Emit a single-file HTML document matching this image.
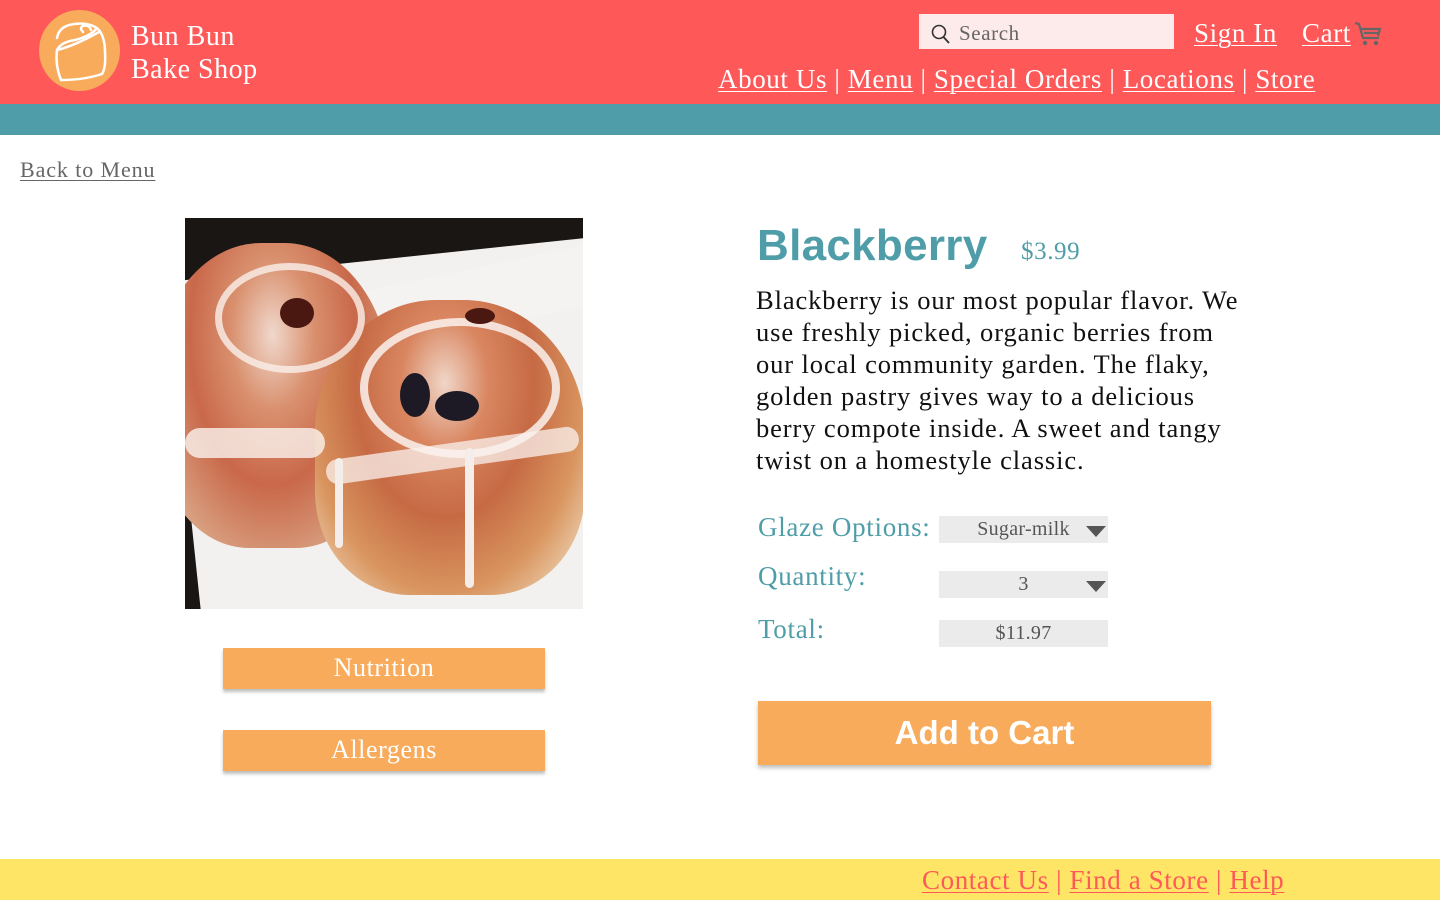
<!DOCTYPE html>
<html><head><meta charset="utf-8"><style>
*{margin:0;padding:0;box-sizing:border-box}
body{width:1440px;height:900px;position:relative;background:#fff;font-family:"Liberation Serif",serif;overflow:hidden;letter-spacing:0.6px}
a{color:inherit;text-decoration:underline;text-decoration-thickness:1px;text-underline-offset:3px}
.hdr{position:absolute;left:0;top:0;width:1440px;height:104px;background:#fe5858}
.teal{position:absolute;left:0;top:104px;width:1440px;height:31px;background:#4f9da8}
.logo{position:absolute;left:39px;top:10px;width:81px;height:81px;border-radius:50%;background:#f9ab5c}
.brand{position:absolute;left:131px;top:20px;color:#fff;font-size:28px;line-height:33px;letter-spacing:0.5px}
.search{position:absolute;left:919px;top:14px;width:255px;height:35px;background:#fdeaea;color:#666;font-size:21px;padding:7px 0 0 40px}
.search svg{position:absolute;left:12px;top:10px}
.top{position:absolute;top:18px;color:#fff;font-size:27px}
.nav{position:absolute;left:718px;top:64px;color:#fff;font-size:27px;white-space:nowrap}
.back{position:absolute;left:20px;top:157px;font-size:22px;color:#666;letter-spacing:0.9px}
.photo{position:absolute;left:185px;top:218px;width:398px;height:391px;background:#1a1614;overflow:hidden}
.photo div{position:absolute}
.btn{position:absolute;left:223px;width:322px;height:41px;background:#f9ab5c;color:#fff;font-size:26px;text-align:center;line-height:40px;box-shadow:0 3px 3px rgba(0,0,0,.25)}
h1{position:absolute;left:757px;top:221px;font-family:"Liberation Sans",sans-serif;font-size:44px;color:#4f9da8;font-weight:bold;letter-spacing:0.3px}
.price{position:absolute;left:1021px;top:238px;font-size:25px;color:#4f9da8}
.desc{position:absolute;left:756px;top:284px;width:495px;font-size:26.5px;line-height:32px;color:#111;letter-spacing:0.9px}
.lbl{position:absolute;left:758px;font-size:27px;color:#4f9da8;letter-spacing:0.7px}
.sel{position:absolute;left:939px;width:169px;height:27px;background:#ebebeb;color:#555;font-size:20px;text-align:center;line-height:26px;letter-spacing:0.3px}
.tri{position:absolute;right:2px;top:10px;width:0;height:0;border-left:10px solid transparent;border-right:10px solid transparent;border-top:11px solid #555}
.add{position:absolute;left:758px;top:701px;width:453px;height:64px;background:#f9ab5c;color:#fff;font-family:"Liberation Sans",sans-serif;font-weight:bold;font-size:33px;text-align:center;line-height:64px;box-shadow:0 3px 4px rgba(0,0,0,.25);letter-spacing:0}
.foot{position:absolute;left:0;top:859px;width:1440px;height:41px;background:#ffe566}
.flinks{position:absolute;left:922px;top:865px;font-size:27px;color:#fe5858;white-space:nowrap}
</style></head><body>
<div class="hdr"></div><div class="teal"></div>
<div class="logo"><svg width="81" height="81" viewBox="0 0 81 81"><path d="M18 28 Q20 16 35 14 Q52 12 60 20 Q66 28 66 42 Q67 58 63 64 Q45 70 22 70 Q16 55 18 40 Q22 32 36 30 Q52 26 58 18 M18 40 Q35 36 60 22 M44 22 Q40 18 44 16 Q50 14 52 20" fill="none" stroke="#fff" stroke-width="2.5" stroke-linecap="round"/></svg></div>
<div class="brand">Bun Bun<br>Bake Shop</div>
<div class="search"><svg width="20" height="22" viewBox="0 0 20 22"><circle cx="8" cy="8" r="6.5" fill="none" stroke="#333" stroke-width="1.6"/><path d="M12.5 13 L18 19" stroke="#333" stroke-width="1.8"/></svg>Search</div>
<a class="top" style="left:1194px">Sign In</a>
<a class="top" style="left:1302px">Cart</a>
<svg style="position:absolute;left:1354px;top:21px" width="28" height="26" viewBox="0 0 28 26"><path d="M1 2 L5 3 L9 17 L25 17 M7 8 L26 8 L24 15 M10 12 L25 12" fill="none" stroke="#666" stroke-width="2.2"/><circle cx="11" cy="22" r="2.2" fill="#666"/><circle cx="22" cy="22" r="2.2" fill="#666"/></svg>
<div class="nav"><a>About Us</a> | <a>Menu</a> | <a>Special Orders</a> | <a>Locations</a> | <a>Store</a></div>
<a class="back">Back to Menu</a>
<div class="photo">
<div style="left:-20px;top:40px;width:460px;height:380px;background:#f3f1ef;border-radius:14px;transform:rotate(-6deg);transform-origin:50% 0"></div>
<div style="left:120px;top:55px;width:300px;height:60px;background:#f5f3f1;transform:rotate(-12deg)"></div>
<div style="left:-30px;top:25px;width:235px;height:305px;border-radius:45% 45% 40% 40%;background:radial-gradient(ellipse at 50% 30%,#f0d8cc 0,#d9906e 25%,#c9684a 50%,#d8a080 78%,#e8c8b0 100%)"></div>
<div style="left:130px;top:82px;width:270px;height:295px;border-radius:45% 45% 35% 35%;background:radial-gradient(ellipse at 48% 28%,#f0d6c8 0,#d98660 22%,#c66a44 45%,#d9955f 70%,#ecd0b0 90%,#f0e0d0 100%)"></div>
<div style="left:30px;top:45px;width:150px;height:110px;border:7px solid rgba(250,240,235,.8);border-radius:50%"></div>
<div style="left:175px;top:100px;width:200px;height:140px;border:8px solid rgba(250,242,238,.85);border-radius:50%"></div>
<div style="left:0;top:210px;width:140px;height:30px;background:rgba(250,242,238,.8);border-radius:15px"></div>
<div style="left:140px;top:225px;width:255px;height:25px;background:rgba(250,242,238,.75);border-radius:12px;transform:rotate(-8deg)"></div>
<div style="left:280px;top:230px;width:9px;height:140px;background:#f4ede9;border-radius:5px"></div>
<div style="left:150px;top:240px;width:8px;height:90px;background:#f4ede9;border-radius:4px"></div>
<div style="left:215px;top:155px;width:30px;height:44px;border-radius:50%;background:#1d1a26"></div>
<div style="left:250px;top:173px;width:44px;height:30px;border-radius:50%;background:#1d1a26"></div>
<div style="left:95px;top:80px;width:34px;height:30px;border-radius:50%;background:#4a1810"></div>
<div style="left:280px;top:90px;width:30px;height:16px;border-radius:50%;background:#4a1810"></div>
</div>
<div class="btn" style="top:648px">Nutrition</div>
<div class="btn" style="top:730px">Allergens</div>
<h1>Blackberry</h1>
<div class="price">$3.99</div>
<div class="desc">Blackberry is our most popular flavor. We use freshly picked, organic berries from our local community garden. The flaky, golden pastry gives way to a delicious berry compote inside. A sweet and tangy twist on a homestyle classic.</div>
<div class="lbl" style="top:512px">Glaze Options:</div>
<div class="lbl" style="top:561px">Quantity:</div>
<div class="lbl" style="top:614px">Total:</div>
<div class="sel" style="top:516px">Sugar-milk<span class="tri"></span></div>
<div class="sel" style="top:571px">3<span class="tri"></span></div>
<div class="sel" style="top:620px">$11.97</div>
<div class="add">Add to Cart</div>
<div class="foot"></div>
<div class="flinks"><a>Contact Us</a> | <a>Find a Store</a> | <a>Help</a></div>
</body></html>
